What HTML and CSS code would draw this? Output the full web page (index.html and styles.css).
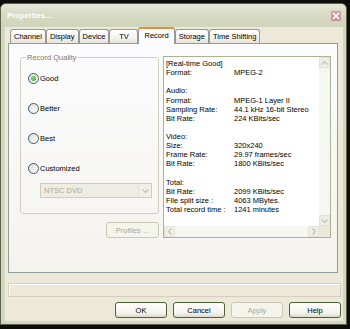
FILE: index.html
```html
<!DOCTYPE html>
<html>
<head>
<meta charset="utf-8">
<link rel="stylesheet" href="styles.css">
</head>
<body>
<div class="window">
  <div class="titlebar">
    <span class="title">Properties...</span>
    <span class="close"><svg width="10" height="10" viewBox="0 0 10 10"><path d="M2 2 L8 8 M8 2 L2 8" stroke="#fff" stroke-width="1.6" fill="none"/></svg></span>
  </div>
  <div class="client">
    <div class="tabs">
      <div class="tab">Channel</div>
      <div class="tab">Display</div>
      <div class="tab">Device</div>
      <div class="tab">TV</div>
      <div class="tab selected">Record</div>
      <div class="tab">Storage</div>
      <div class="tab">Time Shifting</div>
    </div>
    <div class="panel">
      <div class="left">
        <fieldset class="group">
          <legend>Record Quality</legend>
          <div class="radio checked"><span class="dot"></span>Good</div>
          <div class="radio"><span class="dot"></span>Better</div>
          <div class="radio"><span class="dot"></span>Best</div>
          <div class="radio"><span class="dot"></span>Customized</div>
          <div class="combo">
            <span class="combo-text">NTSC DVD</span>
            <span class="combo-btn"><svg width="7" height="4" viewBox="0 0 7 4"><polyline points="0.5,0.5 3.5,3.5 6.5,0.5" fill="none" stroke="#C3C2B6" stroke-width="1.2"/></svg></span>
          </div>
        </fieldset>
        <button class="btn profiles" disabled>Profiles ...</button>
      </div>
      <div class="info">
        <div class="info-text">
          <div class="row"><span class="k">[Real-time Good]</span></div>
          <div class="row"><span class="k">Format:</span><span>MPEG-2</span></div>
          <div class="row"></div>
          <div class="row"><span class="k">Audio:</span></div>
          <div class="row"><span class="k">Format:</span><span>MPEG-1 Layer II</span></div>
          <div class="row"><span class="k">Sampling Rate:</span><span>44.1 kHz 16-bit Stereo</span></div>
          <div class="row"><span class="k">Bit Rate:</span><span>224 KBits/sec</span></div>
          <div class="row"></div>
          <div class="row"><span class="k">Video:</span></div>
          <div class="row"><span class="k">Size:</span><span>320x240</span></div>
          <div class="row"><span class="k">Frame Rate:</span><span>29.97 frames/sec</span></div>
          <div class="row"><span class="k">Bit Rate:</span><span>1800 KBits/sec</span></div>
          <div class="row"></div>
          <div class="row"><span class="k">Total:</span></div>
          <div class="row"><span class="k">Bit Rate:</span><span>2099 KBits/sec</span></div>
          <div class="row"><span class="k">File split size :</span><span>4063 MBytes.</span></div>
          <div class="row"><span class="k">Total record time :</span><span>1241 minutes</span></div>
        </div>
        <div class="vscroll">
          <span class="sbtn"><svg width="7" height="4" viewBox="0 0 7 4"><polyline points="0.5,3.5 3.5,0.5 6.5,3.5" fill="none" stroke="#C3C2B6" stroke-width="1.2"/></svg></span>
          <span class="track"></span>
          <span class="sbtn"><svg width="7" height="4" viewBox="0 0 7 4"><polyline points="0.5,0.5 3.5,3.5 6.5,0.5" fill="none" stroke="#C3C2B6" stroke-width="1.2"/></svg></span>
        </div>
        <div class="hscroll">
          <span class="sbtn"><svg width="4" height="7" viewBox="0 0 4 7"><polyline points="3.5,0.5 0.5,3.5 3.5,6.5" fill="none" stroke="#C3C2B6" stroke-width="1.2"/></svg></span>
          <span class="track"></span>
          <span class="sbtn"><svg width="4" height="7" viewBox="0 0 4 7"><polyline points="0.5,0.5 3.5,3.5 0.5,6.5" fill="none" stroke="#C3C2B6" stroke-width="1.2"/></svg></span>
        </div>
        <div class="corner"></div>
      </div>
    </div>
    <div class="status"></div>
    <div class="buttons">
      <button class="btn">OK</button>
      <button class="btn">Cancel</button>
      <button class="btn" disabled>Apply</button>
      <button class="btn">Help</button>
    </div>
  </div>
</div>
</body>
</html>
```
FILE: styles.css
```css
* { box-sizing: border-box; }
html, body { margin: 0; padding: 0; }
body {
  background: #0e0e0c;
  width: 350px;
  height: 329px;
  overflow: hidden;
  font-family: "Liberation Sans", Arial, sans-serif;
  font-size: 7.5px;
  color: #000;
}
.window {
  margin-top: 3px;
  width: 347px;
  height: 322px;
  border: 1px solid #5d6148;
  border-radius: 6px 6px 0 0;
  background: #D3D7BF;
  display: flex;
  flex-direction: column;
}
.titlebar {
  height: 23px;
  flex: none;
  display: flex;
  align-items: center;
  padding: 0 4px 0 6px;
  background: linear-gradient(#E4E7D7, #D7DBC4 45%, #CFD4BA);
  border-radius: 5px 5px 0 0;
}
.title {
  flex: 1;
  color: #fff;
  font-weight: bold;
  font-size: 7.5px;
  letter-spacing: 0.1px;
}
.close {
  width: 12px;
  height: 12px;
  border: 1px solid #E6CFCB;
  border-radius: 2px;
  background: linear-gradient(#D2A7A4, #C39290);
  display: flex;
  align-items: center;
  justify-content: center;
}
.client {
  flex: 1;
  margin: 0 3px 3px 4px;
  background: #ECE9D8;
  padding: 0 2px 0 3px;
  display: flex;
  flex-direction: column;
}
.tabs {
  height: 16px;
  flex: none;
  display: flex;
  align-items: flex-end;
  padding-left: 2px;
}
.tab {
  height: 14px;
  min-width: 29px;
  padding: 0 3px;
  border: 1px solid #919B9C;
  border-bottom: none;
  border-radius: 3px 3px 0 0;
  background: linear-gradient(#FFFFFF, #F3F2EC 60%, #E6E4DA);
  line-height: 13px;
  text-align: center;
  white-space: nowrap;
}
.tab.selected {
  height: 17px;
  padding: 0 5px;
  margin-bottom: -1px;
  border-top: 2px solid #E3913A;
  background: #FCFCFE;
  position: relative;
  z-index: 1;
  line-height: 14px;
}
.panel {
  width: 330px;
  height: 230px;
  flex: none;
  border: 1px solid #919B9C;
  background: linear-gradient(#FCFCFE, #F4F3EE);
  display: flex;
  align-items: flex-start;
  gap: 4px;
  padding: 9px 0 0 11px;
}
.left {
  width: 139px;
  display: flex;
  flex-direction: column;
}
.group {
  margin: 0;
  padding: 10px 0 15px 7px;
  border: 1px solid #D0D0BF;
  border-radius: 3px;
  min-width: 0;
  width: 139px;
}
.group legend {
  margin-left: -2px;
  padding: 0 1px;
  color: #A0723A;
  line-height: 9px;
}
.radio {
  display: flex;
  align-items: center;
  gap: 1px;
  height: 12px;
}
.radio + .radio { margin-top: 18px; }
.dot {
  width: 11px;
  height: 11px;
  border-radius: 50%;
  border: 1px solid #3B5A72;
  background: linear-gradient(135deg, #DCDCD4, #FFFFFF);
  flex: none;
}
.radio.checked .dot::after {
  content: "";
  display: block;
  width: 5px;
  height: 5px;
  margin: 2px;
  border-radius: 50%;
  background: radial-gradient(circle at 40% 40%, #8EE27C, #2F9324);
}
.combo {
  margin: 9px 0 0 12px;
  width: 112px;
  height: 15px;
  border: 1px solid #CFCDBE;
  background: #EEEDE3;
  display: flex;
  align-items: center;
  color: #ACA899;
}
.combo-text { flex: 1; padding-left: 3px; }
.combo-btn {
  width: 13px;
  height: 13px;
  border-left: 1px solid #E2E0D4;
  background: #F1F0E8;
  display: flex;
  align-items: center;
  justify-content: center;
}
.btn {
  width: 52px;
  height: 16px;
  padding: 0;
  font-family: inherit;
  font-size: 7.5px;
  color: #000;
  border: 1px solid #4B6236;
  border-radius: 3px;
  background: linear-gradient(#FFFFFF, #F4F3EE 70%, #DDDACB);
}
.btn:disabled {
  color: #ACA899;
  border-color: #C9C7BA;
  background: #F5F4EA;
}
.profiles {
  align-self: flex-end;
  width: 53px;
  margin-top: 8px;
}
.info {
  width: 168px;
  height: 182px;
  margin-top: 3px;
  border: 1px solid #A8B590;
  background: #fff;
  display: grid;
  grid-template-columns: 1fr 11px;
  grid-template-rows: 1fr 11px;
}
.info-text {
  padding: 2px 0 0 2px;
  overflow: hidden;
  white-space: nowrap;
}
.row {
  height: 9.125px;
  line-height: 9.125px;
  display: flex;
}
.k { width: 68px; flex: none; }
.vscroll, .hscroll {
  display: flex;
  background: #F7F7F2;
}
.vscroll { flex-direction: column; }
.track { flex: 1; }
.sbtn {
  width: 11px;
  height: 11px;
  flex: none;
  background: #EEEDE6;
  border: 1px solid #E4E3DA;
  display: flex;
  align-items: center;
  justify-content: center;
}
.corner { background: #ECE9D8; }
.status {
  width: 333px;
  height: 14px;
  margin-top: 10px;
  flex: none;
  border: 1px solid #D2CFC0;
  box-shadow: inset 1px 1px #FFFFFF;
}
.buttons {
  margin-top: 5px;
  display: flex;
  justify-content: flex-end;
  gap: 6px;
}
```
